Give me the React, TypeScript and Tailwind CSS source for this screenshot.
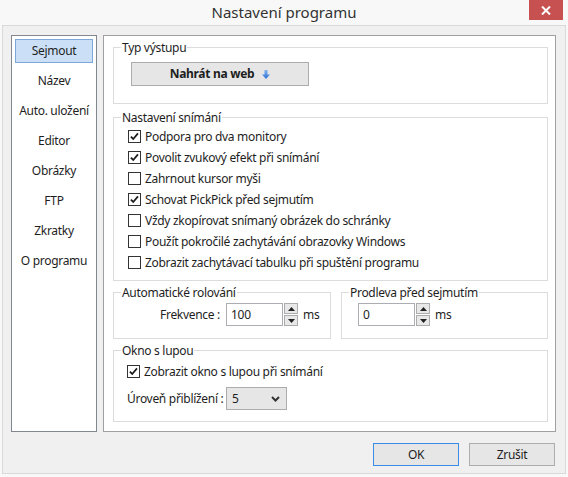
import React from "react";

const font = { fontFamily: '"Noto Sans", "Liberation Sans", sans-serif' };

const Check = () => (
  <svg viewBox="0 0 13 13" className="h-[11px] w-[11px]" aria-hidden="true">
    <path d="M2.2 6.6 L5 9.4 L10.6 2.8" fill="none" stroke="#1a1a1a" strokeWidth="2" />
  </svg>
);

type CheckboxProps = { label: string; checked?: boolean };

const Checkbox: React.FC<CheckboxProps> = ({ label, checked }) => (
  <div className="flex h-[21px] items-center gap-[4px]">
    <span className="flex h-[13px] w-[13px] shrink-0 items-center justify-center border border-[#333333] bg-white">
      {checked ? <Check /> : null}
    </span>
    <span className="whitespace-nowrap">{label}</span>
  </div>
);

const Spinner = () => (
  <div className="ml-px flex h-[23px] w-[14px] flex-col justify-between">
    <button className="flex h-[11px] w-[14px] items-center justify-center border border-[#acacac] bg-[#e8e8e8]">
      <svg viewBox="0 0 7 4" className="h-[4px] w-[7px]" aria-hidden="true">
        <path d="M0 4 L3.5 0 L7 4 Z" fill="#222" />
      </svg>
    </button>
    <button className="flex h-[11px] w-[14px] items-center justify-center border border-[#acacac] bg-[#e8e8e8]">
      <svg viewBox="0 0 7 4" className="h-[4px] w-[7px]" aria-hidden="true">
        <path d="M0 0 L3.5 4 L7 0 Z" fill="#222" />
      </svg>
    </button>
  </div>
);

const NumberField: React.FC<{ value: string }> = ({ value }) => (
  <div className="flex items-center">
    <div className="flex h-[23px] w-[57px] items-center border border-[#abadb3] bg-white pl-[4px]">
      {value}
    </div>
    <Spinner />
    <span className="ml-[5px]">ms</span>
  </div>
);

const Group: React.FC<{ title: string; className?: string; children: React.ReactNode }> = ({
  title,
  className,
  children,
}) => (
  <fieldset className={`border border-[#dcdcdc] ${className ?? ""}`}>
    <legend className="ml-[7px] px-px leading-[15px] text-[#1e1e1e]">{title}</legend>
    {children}
  </fieldset>
);

const navItems = ["Sejmout", "Název", "Auto. uložení", "Editor", "Obrázky", "FTP", "Zkratky", "O programu"];

export default function App() {
  return (
    <div
      className="h-[477px] w-[568px] bg-[#f8f8f8] text-[12px] tracking-[-0.3px] text-[#1e1e1e]"
      style={font}
    >
      <div className="relative flex h-[25px] items-center justify-center">
        <span className="text-[15px] tracking-normal text-[#333333]">Nastavení programu</span>
        <button className="absolute right-[5px] top-0 flex h-[20px] w-[34px] items-center justify-center bg-[#c75050]">
          <svg viewBox="0 0 10 9" className="h-[9px] w-[10px]" aria-hidden="true">
            <path d="M1 0.5 L9 8.5 M9 0.5 L1 8.5" stroke="white" strokeWidth="2" />
          </svg>
        </button>
      </div>

      <div className="mx-[2px] flex h-[449px] flex-col border border-[#d9d9d9] bg-[#f0f0f0] pb-[7px] pl-[8px] pr-[9px] pt-[9px]">
        <div className="flex h-[397px] gap-[6px]">
          <div className="flex w-[86px] flex-col gap-[6px] border border-[#828790] bg-white p-[3px]">
            {navItems.map((item, i) => (
              <div
                key={item}
                className={`flex h-[24px] shrink-0 items-center justify-center whitespace-nowrap border ${
                  i === 0 ? "border-[#7da7d9] bg-[#cbe0f7]" : "border-transparent"
                }`}
              >
                {item}
              </div>
            ))}
          </div>

          <div className="flex w-[453px] flex-col border border-[#a0a0a0] bg-white pl-[9px] pr-[7px] pt-[4px]">
            <Group title="Typ výstupu" className="pb-[17px]">
              <button className="ml-[17px] mt-[7px] flex h-[24px] w-[178px] items-center justify-center gap-[8px] border border-[#acacac] bg-[#e6e6e6] font-bold">
                Nahrát na web
                <svg viewBox="0 0 8 9" className="h-[9px] w-[8px]" aria-hidden="true">
                  <defs>
                    <linearGradient id="arr" x1="0" y1="0" x2="0" y2="1">
                      <stop offset="0" stopColor="#7fb2f0" />
                      <stop offset="1" stopColor="#2f6fd6" />
                    </linearGradient>
                  </defs>
                  <path d="M2.5 0 H5.5 V4.5 H8 L4 9 L0 4.5 H2.5 Z" fill="url(#arr)" />
                </svg>
              </button>
            </Group>

            <Group title="Nastavení snímání" className="mt-[6px] pb-[7px]">
              <div className="mt-px flex flex-col pl-[14px]">
                <Checkbox label="Podpora pro dva monitory" checked />
                <Checkbox label="Povolit zvukový efekt při snímání" checked />
                <Checkbox label="Zahrnout kursor myši" />
                <Checkbox label="Schovat PickPick před sejmutím" checked />
                <Checkbox label="Vždy zkopírovat snímaný obrázek do schránky" />
                <Checkbox label="Použít pokročilé zachytávání obrazovky Windows" />
                <Checkbox label="Zobrazit zachytávací tabulku při spuštění programu" />
              </div>
            </Group>

            <div className="mt-[4px] flex gap-[10px]">
              <Group title="Automatické rolování" className="w-[218px] pb-[12px]">
                <div className="mt-[3px] flex items-center">
                  <span className="w-[112px] pr-[6px] text-right">Frekvence :</span>
                  <NumberField value="100" />
                </div>
              </Group>
              <Group title="Prodleva před sejmutím" className="flex-1 pb-[12px]">
                <div className="mt-[3px] pl-[16px]">
                  <NumberField value="0" />
                </div>
              </Group>
            </div>

            <Group title="Okno s lupou" className="mt-[4px] pb-[11px]">
              <div className="mt-[3px] pl-[13px]">
                <Checkbox label="Zobrazit okno s lupou při snímání" checked />
                <div className="mt-[5px] flex items-center">
                  <span className="w-[99px]">Úroveň přiblížení :</span>
                  <div className="flex h-[23px] w-[61px] items-center justify-between border border-[#acacac] bg-[#e6e6e6] pl-[5px] pr-[6px]">
                    <span>5</span>
                    <svg viewBox="0 0 9 6" className="h-[6px] w-[9px]" aria-hidden="true">
                      <path d="M1 1 L4.5 4.5 L8 1" fill="none" stroke="#333" strokeWidth="2" />
                    </svg>
                  </div>
                </div>
              </div>
            </Group>
          </div>
        </div>

        <div className="mt-[11px] flex justify-end gap-[10px] pr-px">
          <button className="h-[23px] w-[86px] border border-[#3c8ce6] bg-[#e6e6e6]">OK</button>
          <button className="h-[23px] w-[86px] border border-[#acacac] bg-[#e6e6e6]">Zrušit</button>
        </div>
      </div>
    </div>
  );
}
